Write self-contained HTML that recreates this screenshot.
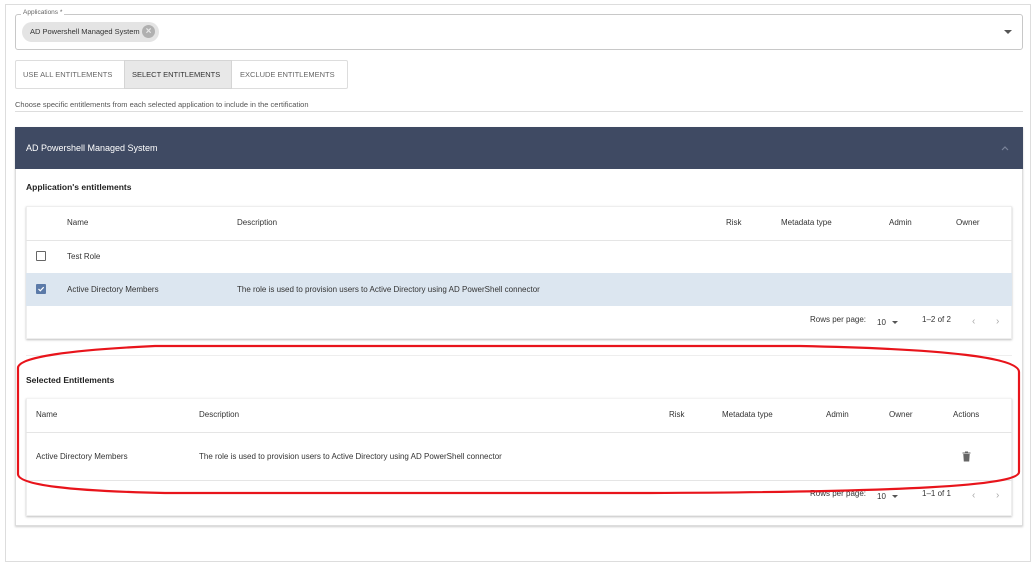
<!DOCTYPE html>
<html><head><meta charset="utf-8"><style>
*{box-sizing:border-box;margin:0;padding:0}
body{width:1035px;height:562px;background:#fff;font-family:"Liberation Sans",sans-serif;font-size:8px;color:#333;position:relative;overflow:hidden}
.a{position:absolute}
.t{position:absolute;white-space:nowrap}
</style></head><body>
<div class="a" style="left:5px;top:4px;width:1026px;height:558px;border:1px solid #ddd"></div>
<div class="a" style="left:15px;top:14px;width:1008px;height:36px;border:1px solid #c8c8c8;border-radius:3px"></div>
<div class="t" style="left:21px;top:9px;background:#fff;padding:0 2px;font-size:6.5px;color:#666">Applications *</div>
<div class="a" style="left:22px;top:22px;width:137px;height:20px;border-radius:10px;background:#e4e4e4"></div>
<div class="t" style="left:30px;top:27px;font-size:7.5px;color:#333">AD Powershell Managed System</div>
<div class="a" style="left:142px;top:25px;width:13px;height:13px;border-radius:50%;background:#b0b0b0;color:#e8e8e8;font-size:10px;line-height:13px;text-align:center;font-weight:bold">×</div>
<svg class="a" style="left:1004px;top:30px" width="8" height="5"><path d="M0 0L8 0L4 4Z" fill="#555"/></svg>
<div class="a" style="left:15px;top:60px;width:333px;height:29px;border:1px solid #ddd;border-radius:2px"></div>
<div class="a" style="left:124px;top:60px;width:108px;height:29px;background:#e8e8e8;border:1px solid #d5d5d5"></div>
<div class="t" style="left:23px;top:70px;color:#666;font-size:7.5px">USE ALL ENTITLEMENTS</div>
<div class="t" style="left:132px;top:70px;color:#333;font-size:7.5px">SELECT ENTITLEMENTS</div>
<div class="t" style="left:240px;top:70px;color:#666;font-size:7.5px">EXCLUDE ENTITLEMENTS</div>
<div class="t" style="left:15px;top:100px;font-size:7.5px;color:#555">Choose specific entitlements from each selected application to include in the certification</div>
<div class="a" style="left:15px;top:111px;width:1008px;height:1px;background:#ddd"></div>
<div class="a" style="left:15px;top:127px;width:1008px;height:399px;border:1px solid #ddd;box-shadow:0 1px 2px rgba(0,0,0,.2)"></div>
<div class="a" style="left:15px;top:127px;width:1008px;height:42px;background:#3f4a63"></div>
<div class="t" style="left:26px;top:143px;font-size:9px;color:#fff">AD Powershell Managed System</div>
<svg class="a" style="left:1001px;top:145px" width="8" height="6"><path d="M1 5L4 2L7 5" fill="none" stroke="#7a8399" stroke-width="1.2"/></svg>
<div class="t" style="left:26px;top:182px;font-weight:bold;font-size:8.5px;color:#222">Application's entitlements</div>
<div class="a" style="left:26px;top:206px;width:986px;height:133px;box-shadow:0 1px 2px rgba(0,0,0,.25);border:1px solid #eee"></div>
<div class="t" style="left:67px;top:218px">Name</div>
<div class="t" style="left:237px;top:218px">Description</div>
<div class="t" style="left:726px;top:218px">Risk</div>
<div class="t" style="left:781px;top:218px">Metadata type</div>
<div class="t" style="left:889px;top:218px">Admin</div>
<div class="t" style="left:956px;top:218px">Owner</div>
<div class="a" style="left:26px;top:240px;width:986px;height:1px;background:#e5e5e5"></div>
<div class="a" style="left:36px;top:251px;width:10px;height:10px;border:1.5px solid #666;border-radius:1px"></div>
<div class="t" style="left:67px;top:252px">Test Role</div>
<div class="a" style="left:26px;top:273px;width:986px;height:33px;background:#dce6f0"></div>
<div class="a" style="left:36px;top:284px;width:10px;height:10px;background:#5b7aa8;border-radius:1px"></div>
<svg class="a" style="left:37px;top:285px" width="8" height="8"><path d="M1.5 4L3.3 5.8L6.7 2.2" fill="none" stroke="#fff" stroke-width="1.2"/></svg>
<div class="t" style="left:67px;top:285px">Active Directory Members</div>
<div class="t" style="left:237px;top:285px">The role is used to provision users to Active Directory using AD PowerShell connector</div>
<div class="t" style="left:810px;top:315px">Rows per page:</div>
<div class="t" style="left:877px;top:318px">10</div>
<svg class="a" style="left:892px;top:321px" width="6" height="4"><path d="M0 0L6 0L3 3Z" fill="#555"/></svg>
<div class="t" style="left:922px;top:315px">1–2 of 2</div>
<div class="t" style="left:972px;top:316px;color:#aaa;font-size:10px">‹</div>
<div class="t" style="left:996px;top:316px;color:#aaa;font-size:10px">›</div>
<div class="a" style="left:26px;top:355px;width:986px;height:1px;background:#eee"></div>
<div class="t" style="left:26px;top:375px;font-weight:bold;font-size:8.5px;color:#222">Selected Entitlements</div>
<div class="a" style="left:26px;top:398px;width:986px;height:118px;box-shadow:0 1px 2px rgba(0,0,0,.25);border:1px solid #eee;border-top-color:#f3f3f3"></div>
<div class="t" style="left:36px;top:410px">Name</div>
<div class="t" style="left:199px;top:410px">Description</div>
<div class="t" style="left:669px;top:410px">Risk</div>
<div class="t" style="left:722px;top:410px">Metadata type</div>
<div class="t" style="left:826px;top:410px">Admin</div>
<div class="t" style="left:889px;top:410px">Owner</div>
<div class="t" style="left:953px;top:410px">Actions</div>
<div class="a" style="left:26px;top:432px;width:986px;height:1px;background:#e5e5e5"></div>
<div class="t" style="left:36px;top:452px">Active Directory Members</div>
<div class="t" style="left:199px;top:452px">The role is used to provision users to Active Directory using AD PowerShell connector</div>
<svg class="a" style="left:962px;top:451px" width="9" height="11"><path d="M0.5 1.5H8.5V2.5H0.5Z M3 0.5H6V1.5H3Z M1.3 3H7.7L7.2 10.5H1.8Z" fill="#666"/></svg>
<div class="a" style="left:26px;top:480px;width:986px;height:1px;background:#e5e5e5"></div>
<div class="t" style="left:810px;top:489px">Rows per page:</div>
<div class="t" style="left:877px;top:492px">10</div>
<svg class="a" style="left:892px;top:495px" width="6" height="4"><path d="M0 0L6 0L3 3Z" fill="#555"/></svg>
<div class="t" style="left:922px;top:489px">1–1 of 1</div>
<div class="t" style="left:972px;top:490px;color:#aaa;font-size:10px">‹</div>
<div class="t" style="left:996px;top:490px;color:#aaa;font-size:10px">›</div>
<svg class="a" style="left:0;top:0" width="1035" height="562"><path d="M155 346 L800 346 C950 349 1019 358 1019 372 L1019 472 C1019 486 900 492 650 493 L165 493 C70 491 18 485 18 474 L18 368 C18 357 70 350 155 346 Z" fill="none" stroke="#e8141b" stroke-width="2.2"/></svg>
</body></html>
